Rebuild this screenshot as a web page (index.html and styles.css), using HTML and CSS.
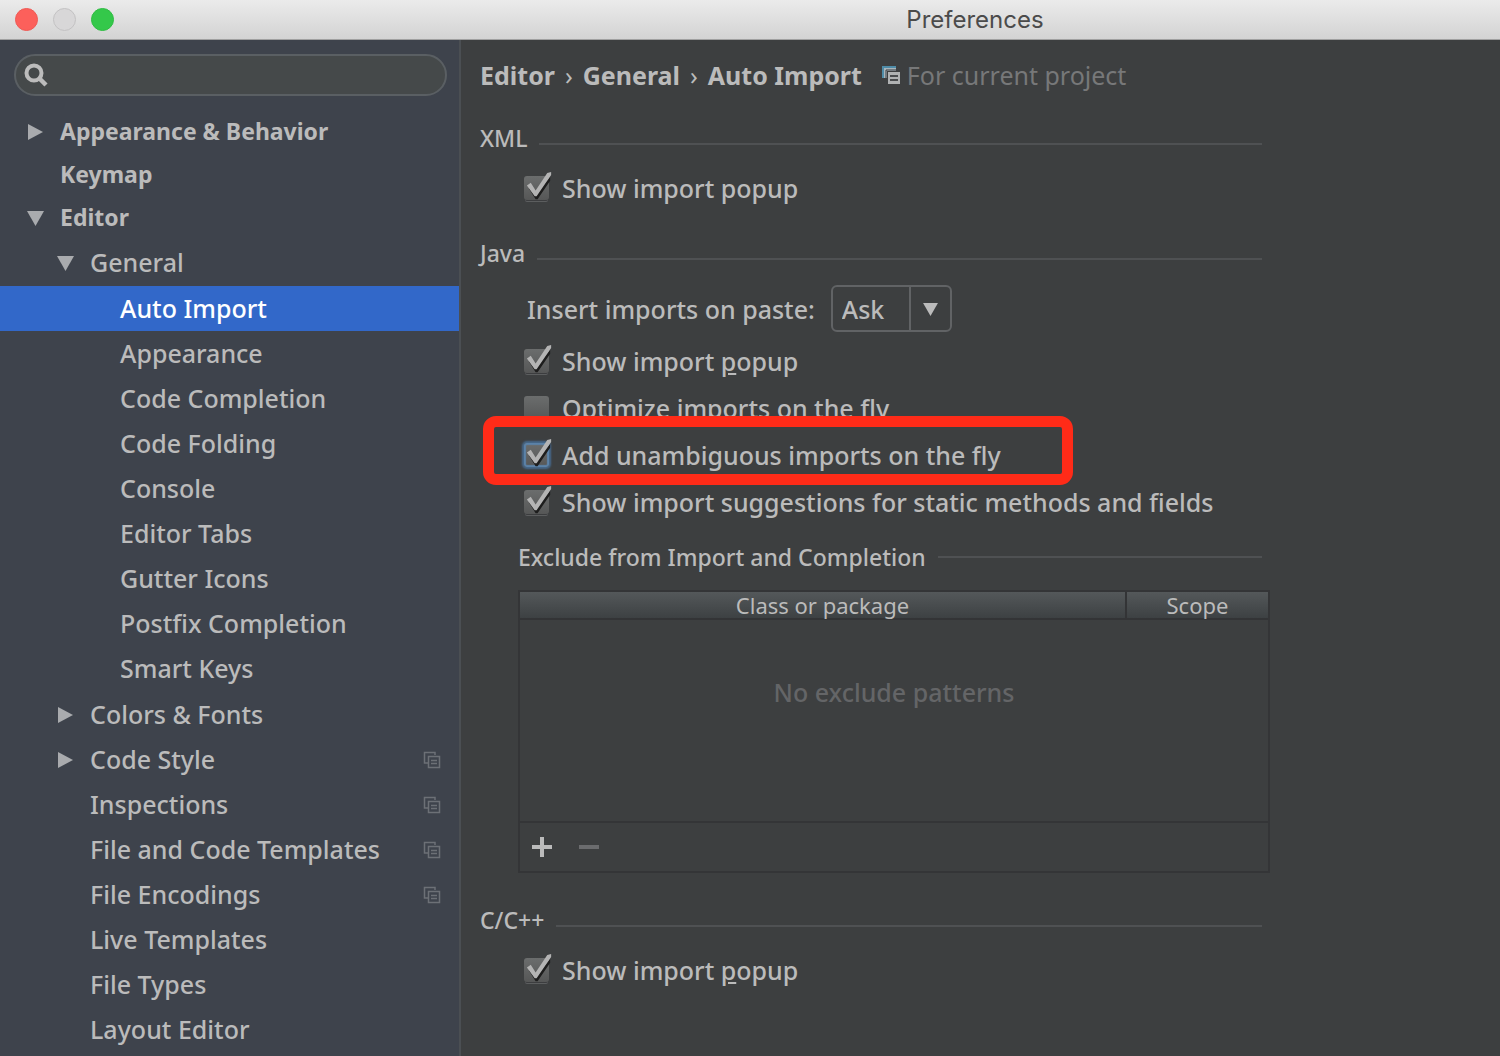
FILE: index.html
```html
<!DOCTYPE html>
<html lang="en">
<head>
    <meta charset="UTF-8">
    <meta name="viewport" content="width=device-width, initial-scale=1.0">
    <title>Preferences</title>
    <link rel="stylesheet" href="styles.css">
</head>
<body>

<!-- Shared icons -->
<svg class="sprite" aria-hidden="true">
    <symbol id="tick" viewBox="0 0 32 32">
        <path d="M5 17 L8 15 L13 22 L27 5 L27 9 L14 28 L12 28 Z" fill="#1d1d1d"/>
        <path d="M3 14 L7 11 L12 19 L24 1 L28 0 L28 3 L13 25 L11 25 Z" fill="#b4b4b4"/>
    </symbol>
    <symbol id="copy" viewBox="0 0 18 18">
        <path d="M5 12 H1.5 V1.5 H12 V4" fill="none" stroke="currentColor" stroke-width="1.5"/>
        <rect x="5.5" y="5.5" width="11" height="11" fill="none" stroke="currentColor" stroke-width="1.5"/>
        <path d="M8 9.5 H14 M8 12.5 H14" stroke="currentColor" stroke-width="1.5"/>
    </symbol>
    <symbol id="right" viewBox="0 0 17 16">
        <path d="M1 0 L16 8 L1 16 Z" fill="currentColor"/>
    </symbol>
    <symbol id="down" viewBox="0 0 17 16">
        <path d="M0 1 H17 L8.5 16 Z" fill="currentColor"/>
    </symbol>
</svg>

<header class="titlebar">
    <div class="lights">
        <button class="light light-close" aria-label="Close"></button>
        <button class="light light-min" aria-label="Minimize" disabled></button>
        <button class="light light-zoom" aria-label="Zoom"></button>
    </div>
    <h1 class="title">Preferences</h1>
</header>

<div class="window">
    <aside class="sidebar">
        <label class="search">
            <svg class="search-icon" viewBox="0 0 24 24" aria-hidden="true">
                <circle cx="10" cy="10" r="7.5" fill="none" stroke="currentColor" stroke-width="4"/>
                <path d="M15.5 15.5 L22 22" stroke="currentColor" stroke-width="4.5"/>
            </svg>
            <input class="search-input" type="text" aria-label="Search settings">
        </label>

        <ul class="tree">
            <li><a class="item top" href="#"><svg class="arrow"><use href="#right"/></svg>Appearance &amp; Behavior</a></li>
            <li><a class="item top" href="#"><span class="arrow"></span>Keymap</a></li>
            <li><a class="item top" href="#"><svg class="arrow"><use href="#down"/></svg>Editor</a>
                <ul class="level-2">
                    <li><a class="item" href="#"><svg class="arrow"><use href="#down"/></svg>General</a>
                        <ul class="level-3">
                            <li><a class="item selected" href="#">Auto Import</a></li>
                            <li><a class="item" href="#">Appearance</a></li>
                            <li><a class="item" href="#">Code Completion</a></li>
                            <li><a class="item" href="#">Code Folding</a></li>
                            <li><a class="item" href="#">Console</a></li>
                            <li><a class="item" href="#">Editor Tabs</a></li>
                            <li><a class="item" href="#">Gutter Icons</a></li>
                            <li><a class="item" href="#">Postfix Completion</a></li>
                            <li><a class="item" href="#">Smart Keys</a></li>
                        </ul>
                    </li>
                    <li><a class="item" href="#"><svg class="arrow"><use href="#right"/></svg>Colors &amp; Fonts</a></li>
                    <li><a class="item" href="#"><svg class="arrow"><use href="#right"/></svg>Code Style<svg class="project"><use href="#copy"/></svg></a></li>
                    <li><a class="item" href="#"><span class="arrow"></span>Inspections<svg class="project"><use href="#copy"/></svg></a></li>
                    <li><a class="item" href="#"><span class="arrow"></span>File and Code Templates<svg class="project"><use href="#copy"/></svg></a></li>
                    <li><a class="item" href="#"><span class="arrow"></span>File Encodings<svg class="project"><use href="#copy"/></svg></a></li>
                    <li><a class="item" href="#"><span class="arrow"></span>Live Templates</a></li>
                    <li><a class="item" href="#"><span class="arrow"></span>File Types</a></li>
                    <li><a class="item" href="#"><span class="arrow"></span>Layout Editor</a></li>
                </ul>
            </li>
        </ul>
    </aside>

    <main class="content">
        <div class="breadcrumb">
            <h2 class="path"><span>Editor</span><span class="sep">›</span><span>General</span><span class="sep">›</span><span>Auto Import</span></h2>
            <svg class="scope-icon" viewBox="0 0 18 18" aria-hidden="true">
                <path d="M1 12 V1 H14 V5 H5 V12 Z" fill="#a9b5bc"/>
                <path d="M1 12 V1 H14" fill="none" stroke="#4f8ca8" stroke-width="2"/>
                <path d="M4 12 V4 H14" fill="none" stroke="#3c3d3f"/>
                <rect x="6" y="6" width="12" height="12" fill="#b0b2b3"/>
                <path d="M8 10 H16 M8 14 H16" stroke="#4a4c4e" stroke-width="2"/>
            </svg>
            <span class="scope">For current project</span>
        </div>

        <section class="section">
            <h3 class="heading">XML</h3>
            <label class="check">
                <span class="box"><input type="checkbox" checked><svg class="tick"><use href="#tick"/></svg></span>
                <span>Show import popup</span>
            </label>
        </section>

        <section class="section">
            <h3 class="heading">Java</h3>
            <div class="field">
                <label for="paste">Insert imports on paste:</label>
                <span class="select">
                    <select id="paste">
                        <option>Ask</option>
                        <option>All</option>
                        <option>None</option>
                    </select>
                    <svg class="select-arrow"><use href="#down"/></svg>
                </span>
            </div>
            <label class="check">
                <span class="box"><input type="checkbox" checked><svg class="tick"><use href="#tick"/></svg></span>
                <span>Show import <u>p</u>opup</span>
            </label>
            <label class="check">
                <span class="box"><input type="checkbox"><svg class="tick"><use href="#tick"/></svg></span>
                <span>Optimize imports on the fly</span>
            </label>
            <label class="check marked">
                <span class="box focused"><input type="checkbox" checked><svg class="tick"><use href="#tick"/></svg></span>
                <span>Add unambiguous imports on the fly</span>
            </label>
            <label class="check">
                <span class="box"><input type="checkbox" checked><svg class="tick"><use href="#tick"/></svg></span>
                <span>Show import suggestions for static methods and fields</span>
            </label>

            <div class="exclude">
                <h4 class="heading heading-small">Exclude from Import and Completion</h4>
                <div class="panel">
                    <table class="patterns">
                        <thead>
                            <tr><th>Class or package</th><th class="col-scope">Scope</th></tr>
                        </thead>
                        <tbody>
                            <tr><td colspan="2">No exclude patterns</td></tr>
                        </tbody>
                    </table>
                    <div class="toolbar">
                        <button class="tool" aria-label="Add"><svg viewBox="0 0 20 20"><path d="M0 10 H20 M10 0 V20" stroke="currentColor" stroke-width="4"/></svg></button>
                        <button class="tool" aria-label="Remove" disabled><svg viewBox="0 0 20 20"><path d="M0 10 H20" stroke="currentColor" stroke-width="4"/></svg></button>
                    </div>
                </div>
            </div>
        </section>

        <section class="section">
            <h3 class="heading">C/C++</h3>
            <label class="check">
                <span class="box"><input type="checkbox" checked><svg class="tick"><use href="#tick"/></svg></span>
                <span>Show import <u>p</u>opup</span>
            </label>
        </section>
    </main>
</div>

</body>
</html>
```

FILE: styles.css
```css
*,
*::before,
*::after {
    box-sizing: border-box;
}

body {
    margin: 0;
    min-height: 100vh;
    display: flex;
    flex-direction: column;
    background-color: #3d3f40;
    color: #bbbbbb;
    font-family: "Noto Sans", "Open Sans", sans-serif;
    font-size: 25px;
    font-weight: 500;
    line-height: 36px;
}

h1, h2, h3, h4, ul {
    margin: 0;
    padding: 0;
    font-size: inherit;
    font-weight: inherit;
}

ul {
    list-style: none;
}

button, input, select {
    font: inherit;
    color: inherit;
    margin: 0;
    padding: 0;
    border: none;
    background: none;
}

.sprite {
    display: none;
}

/* Title bar */
.titlebar {
    display: flex;
    align-items: center;
    height: 40px;
    padding-left: 15px;
    background: linear-gradient(#ebebeb, #d3d3d3);
    border-bottom: 1px solid #a0a0a0;
}

.lights {
    display: flex;
    gap: 15px;
}

.light {
    width: 23px;
    height: 23px;
    border-radius: 50%;
    border: 1px solid transparent;
}

.light-close {
    background-color: #fc605b;
    border-color: #ef5a55;
}

.light-min {
    background-color: #d8d7d8;
    border-color: #c3c2c3;
}

.light-zoom {
    background-color: #34c84a;
    border-color: #2fbd43;
}

.title {
    flex: 1;
    padding-left: 336px;
    text-align: center;
    font-family: Inter, Roboto, sans-serif;
    font-size: 24px;
    font-weight: normal;
    color: #4b4b4b;
}

/* Sidebar */
.window {
    flex: 1;
    display: flex;
}

.sidebar {
    flex: 0 0 461px;
    padding-top: 14px;
    background-color: #3e434c;
    border-right: 2px solid #4b4f53;
}

.search {
    display: flex;
    align-items: center;
    height: 42px;
    margin: 0 12px 14px 14px;
    padding-left: 8px;
    border: 2px solid #5a5f63;
    border-radius: 21px;
    background-color: #45494a;
}

.search-icon {
    width: 24px;
    height: 24px;
    color: #bcbcbc;
}

.search-input {
    flex: 1;
    min-width: 0;
    padding: 0 12px;
    outline: none;
}

.item {
    display: flex;
    align-items: center;
    height: 45px;
    padding: 0 18px 2px 57px;
    color: inherit;
    text-decoration: none;
}

.top {
    height: 43px;
    padding-left: 27px;
    font-weight: bold;
    font-size: 23px;
}

.level-2 {
    padding-top: 1px;
}

.level-3 {
    padding: 1px 0;
}

.level-3 .item {
    padding-left: 120px;
}

.selected {
    background-color: #3268c9;
    color: #ffffff;
}

.arrow {
    width: 17px;
    height: 16px;
    margin: 2px 16px 0 0;
    color: #a9abae;
}

.project {
    width: 18px;
    height: 18px;
    margin: 2px 0 0 auto;
    color: #6c7076;
}

/* Settings page */
.content {
    flex: 1;
    padding: 17px 20px 24px 19px;
}

.breadcrumb {
    display: flex;
    align-items: center;
    margin-bottom: 27px;
}

.path {
    display: flex;
    gap: 10px;
    font-weight: bold;
}

.sep {
    font-weight: normal;
}

.scope-icon {
    width: 18px;
    height: 18px;
    margin: 0 7px 0 20px;
}

.scope {
    color: #777879;
    font-weight: normal;
}

.section {
    max-width: 782px;
    margin-bottom: 24px;
}

.heading {
    display: flex;
    align-items: center;
    margin-bottom: 8px;
    font-size: 23px;
}

.heading::after {
    content: "";
    flex: 1;
    height: 2px;
    margin: 12px 0 0 12px;
    background-color: #4f5153;
}

.check {
    position: relative;
    display: flex;
    align-items: center;
    height: 47px;
    padding-left: 44px;
}

.box {
    position: relative;
    display: flex;
    margin-right: 13px;
}

.box input {
    appearance: none;
    width: 25px;
    height: 24px;
    border-radius: 3px;
    background: linear-gradient(#6b6d6d, #565757);
    box-shadow: 0 2px 0 -1px #3c3d3f, 0 3px 0 -1px #5c5e5f;
}

.tick {
    position: absolute;
    left: 0;
    top: -4px;
    width: 31px;
    height: 31px;
    visibility: hidden;
    pointer-events: none;
}

.box input:checked + .tick {
    visibility: visible;
}

.focused input {
    box-shadow: 0 0 2px 2px #46698c, inset 0 0 1px 2px #5b82a8;
}

/* Red frame drawn round the option */
.marked::after {
    content: "";
    position: absolute;
    left: 3px;
    top: -15px;
    width: 590px;
    height: 69px;
    border: 11px solid #ff2b18;
    border-radius: 13px;
    pointer-events: none;
}

.field {
    display: flex;
    align-items: center;
    gap: 16px;
    margin: 14px 0 5px;
    padding-left: 47px;
}

.select {
    position: relative;
    display: flex;
}

.select select {
    appearance: none;
    width: 121px;
    height: 47px;
    padding-left: 9px;
    border: 2px solid #616365;
    border-radius: 6px;
    background: linear-gradient(#616365, #616365) 76px 0 / 2px 100% no-repeat;
}

.select-arrow {
    position: absolute;
    right: 13px;
    top: 17px;
    width: 17px;
    height: 14px;
    pointer-events: none;
}

.exclude {
    padding: 14px 0 5px 38px;
}

.heading-small {
    margin-bottom: 15px;
}

.heading-small::after {
    margin-top: 0;
}

.panel {
    margin-right: -8px;
    border: 2px solid #343537;
}

.patterns {
    width: 100%;
    border-collapse: collapse;
}

.patterns th {
    height: 26px;
    padding: 0;
    line-height: 26px;
    font-size: 22px;
    font-weight: normal;
    background: linear-gradient(#54585a, #3d4143);
    border-bottom: 2px solid #333436;
}

.patterns .col-scope {
    width: 142px;
    border-left: 2px solid #333436;
}

.patterns td {
    height: 202px;
    padding: 54px 0 0;
    vertical-align: top;
    text-align: center;
    color: #646567;
}

.toolbar {
    display: flex;
    gap: 27px;
    padding: 14px 12px;
    border-top: 2px solid #343537;
}

.tool {
    display: flex;
    width: 20px;
    height: 20px;
}

.tool:disabled {
    color: #6b6c6e;
}
```
